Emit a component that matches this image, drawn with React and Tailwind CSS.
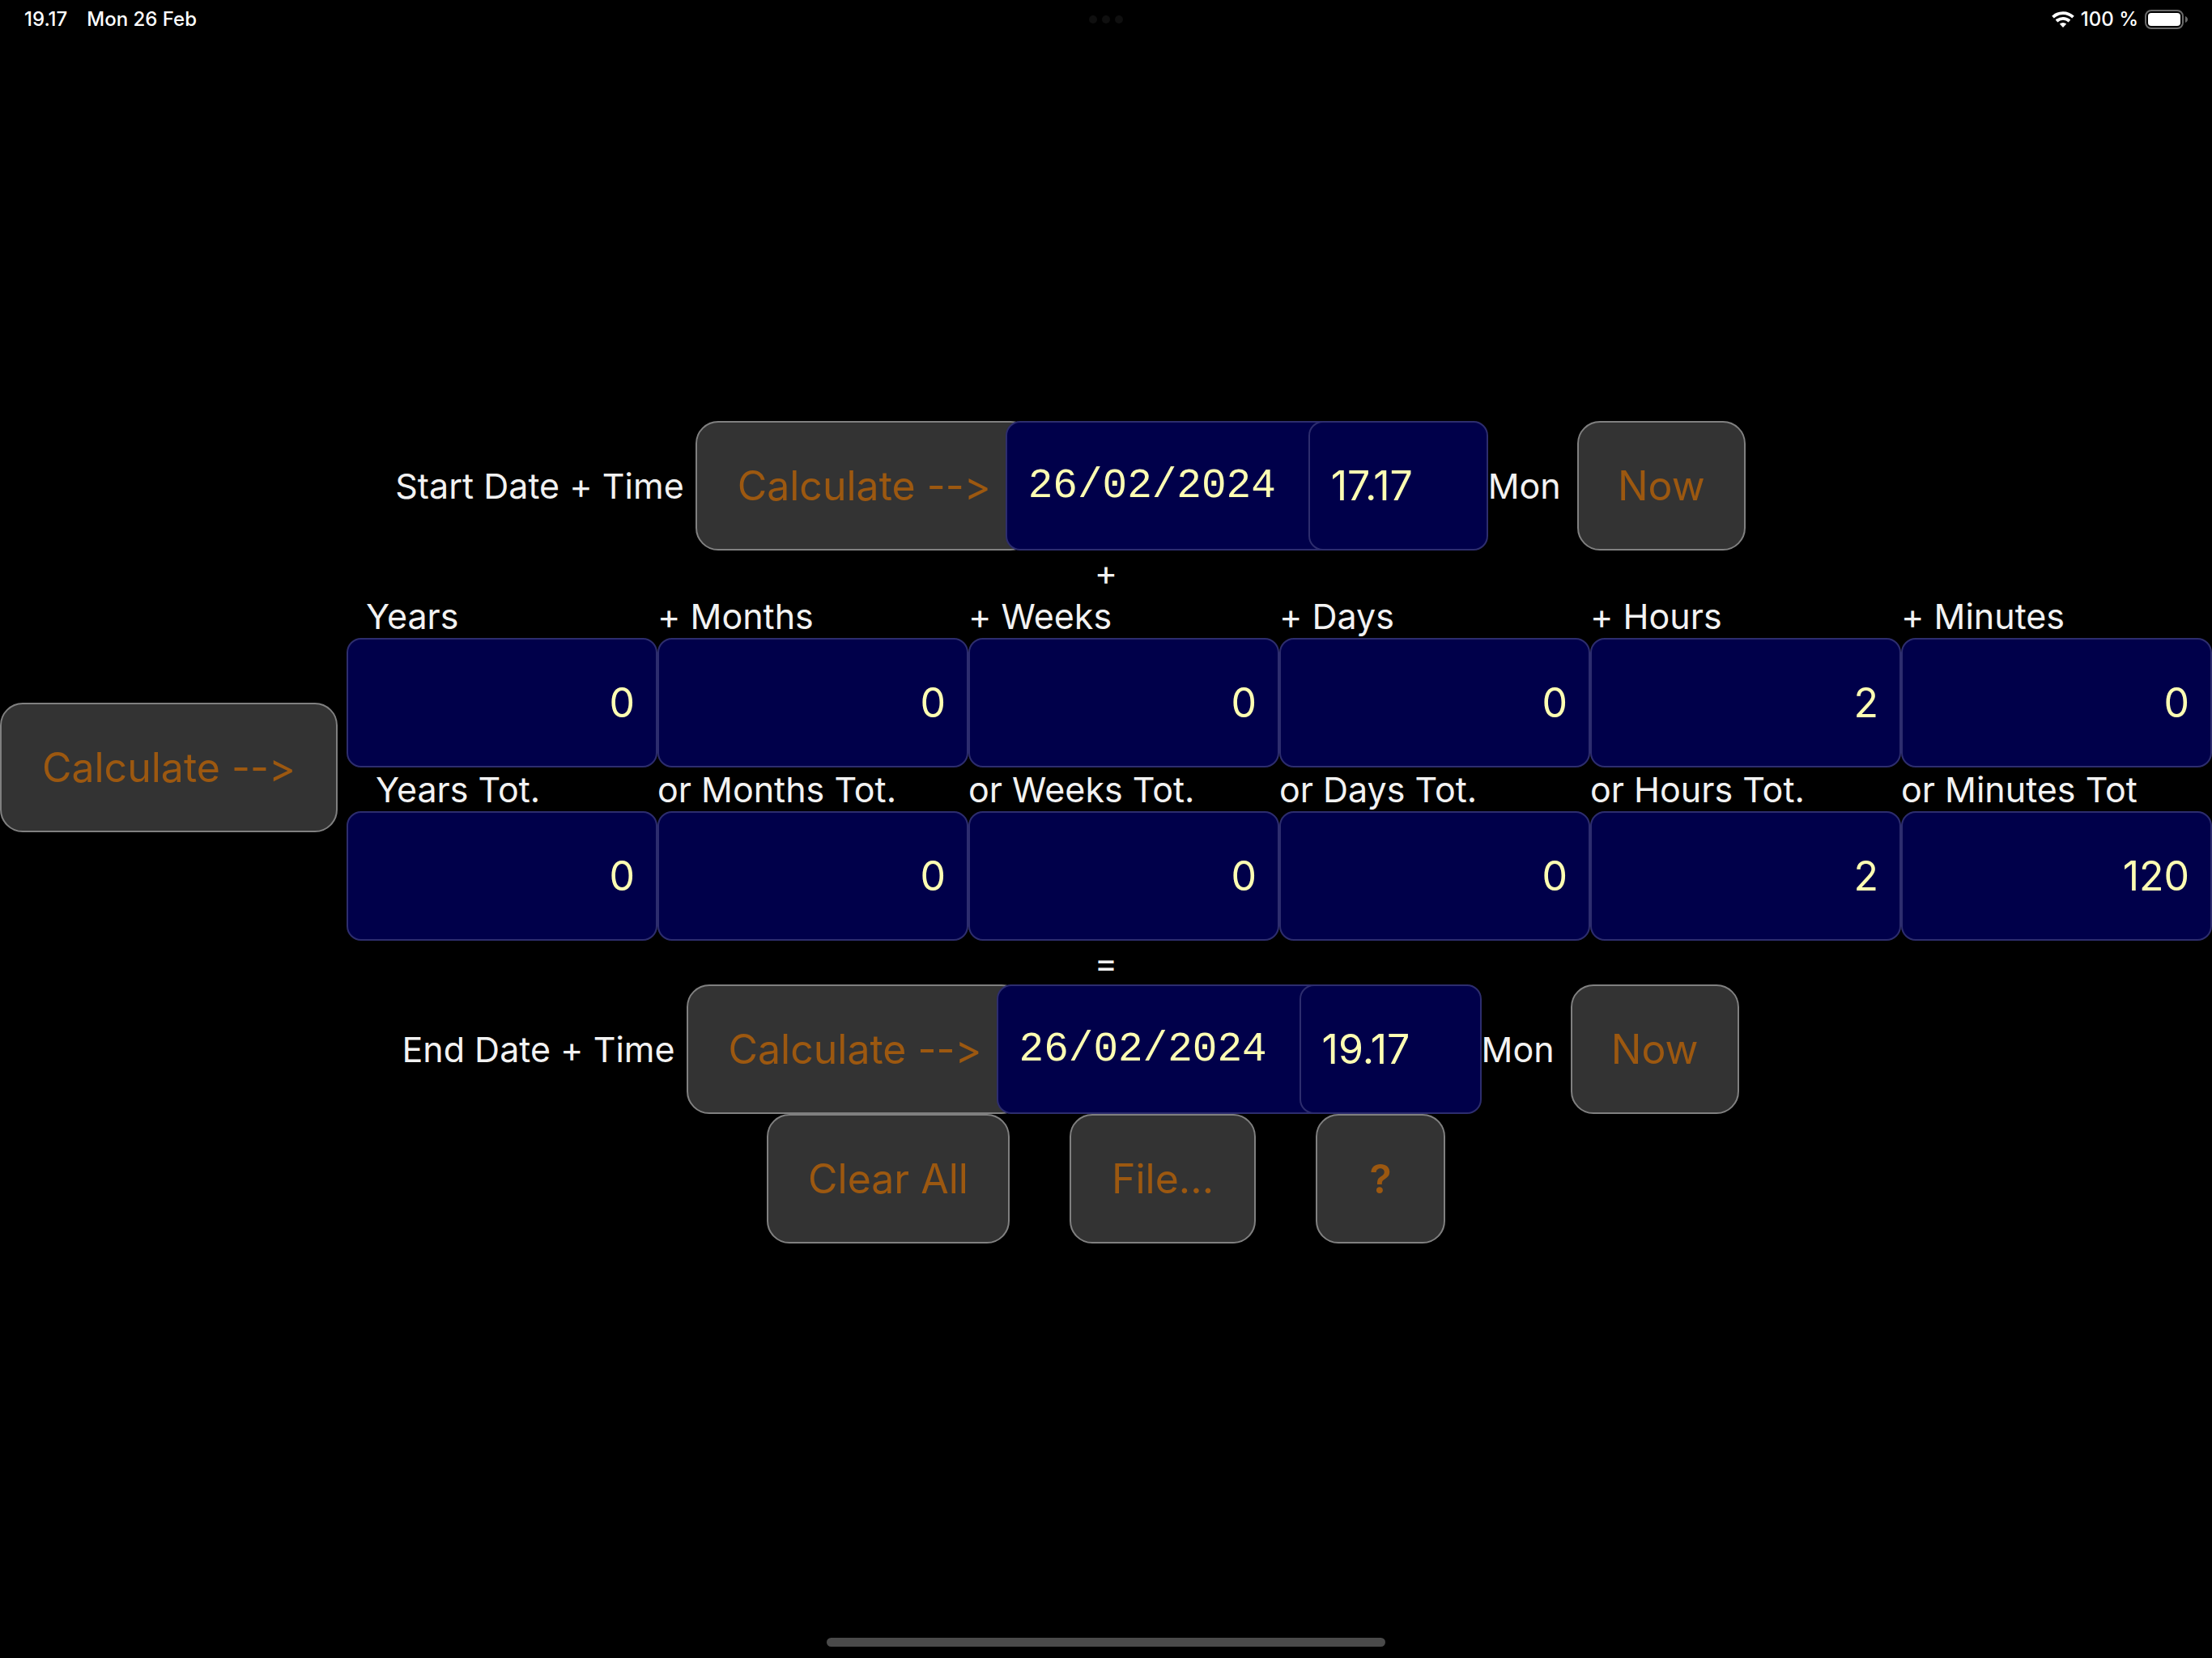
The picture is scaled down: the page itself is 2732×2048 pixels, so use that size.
import React from "react";

const BUTTON =
  "flex h-40 shrink-0 items-center justify-center whitespace-nowrap rounded-[28px] border-2 border-[#808080] bg-[#333333] text-[50px] text-[#9c5810]";
const FIELD =
  "h-40 min-w-0 rounded-[18px] border-2 border-[#2d2d6e] bg-[#00004a] px-[26px] text-[#ffffb3] outline-none";

const UNITS = [
  { add: "Years", total: "Years Tot.", addClass: "pl-6", totalClass: "pl-9", addValue: "0", totalValue: "0" },
  { add: "+ Months", total: "or Months Tot.", addValue: "0", totalValue: "0" },
  { add: "+ Weeks", total: "or Weeks Tot.", addValue: "0", totalValue: "0" },
  { add: "+ Days", total: "or Days Tot.", addValue: "0", totalValue: "0" },
  { add: "+ Hours", total: "or Hours Tot.", addValue: "2", totalValue: "2" },
  { add: "+ Minutes", total: "or Minutes Tot", addValue: "0", totalValue: "120" },
];

function StatusBar() {
  return (
    <header className="flex h-12 items-center justify-between px-[30px] text-[24px] font-medium text-white">
      <div className="flex flex-1 items-center gap-6">
        <span>19.17</span>
        <span>Mon 26 Feb</span>
      </div>
      <div className="flex gap-[6px]">
        <span className="size-[10px] rounded-full bg-[#0f0f0f]" />
        <span className="size-[10px] rounded-full bg-[#0f0f0f]" />
        <span className="size-[10px] rounded-full bg-[#0f0f0f]" />
      </div>
      <div className="flex flex-1 items-center justify-end gap-2">
        <svg className="h-5 w-7" viewBox="0 0 28 20" fill="none" stroke="white" strokeWidth="3.8">
          <path d="M1.500 7.200a18 18 0 0 1 25 0" />
          <path d="M6 12a11.600 11.600 0 0 1 16 0" />
          <path d="M14 20l-4.200-4.400a6 6 0 0 1 8.400 0z" fill="white" stroke="none" />
        </svg>
        <span>100 %</span>
        <svg className="h-6 w-[53px]" viewBox="0 0 53 24" fill="none">
          <rect x="1" y="1" width="46" height="22" rx="7" stroke="#6b6b6b" strokeWidth="2" />
          <rect x="4" y="4" width="40" height="16" rx="4" fill="white" />
          <path d="M50 8c4 1.500 4 6.500 0 8z" fill="#6b6b6b" />
        </svg>
      </div>
    </header>
  );
}

function DateRow({ id, label, time, timeClass }) {
  return (
    <div className="flex items-center justify-center pr-[88px]">
      <label htmlFor={id} className="pr-[14px] whitespace-nowrap">{label}</label>
      <button type="button" className={BUTTON + " -mr-[34px] w-[417px]"}>Calculate --&gt;</button>
      <input
        id={id}
        defaultValue="26/02/2024"
        className={FIELD + " relative -mr-[34px] w-[408px] font-['Liberation_Mono',monospace] text-[51px]"}
      />
      <input
        aria-label={label + " (time)"}
        defaultValue={time}
        className={FIELD + " relative text-[50px] " + timeClass}
      />
      <span className="w-[110px] whitespace-nowrap">Mon</span>
      <button type="button" className={BUTTON + " w-[208px]"}>Now</button>
    </div>
  );
}

function UnitCell({ id, label, value, labelClass = "" }) {
  return (
    <div className="flex min-w-0 flex-col">
      <label htmlFor={id} className={"whitespace-nowrap " + labelClass}>{label}</label>
      <input id={id} defaultValue={value} className={FIELD + " w-full text-right text-[50px]"} />
    </div>
  );
}

export default function App() {
  return (
    <div className="flex min-h-screen flex-col bg-black font-['Inter',sans-serif] [font-variant-ligatures:none] [font-feature-settings:'calt'_0]">
      <StatusBar />
      <main className="flex flex-1 flex-col justify-center text-[43px] leading-[54px] text-[#f2f2f2]">
        <DateRow id="start" label="Start Date + Time" time="17.17" timeClass="w-[222px]" />
        <div className="text-center">+</div>
        <div className="flex items-center gap-[11px]">
          <button type="button" className={BUTTON + " w-[417px]"}>Calculate --&gt;</button>
          <div className="grid min-w-0 flex-1 grid-cols-6">
            {UNITS.map((u) => (
              <UnitCell key={u.add} id={u.add} label={u.add} value={u.addValue} labelClass={u.addClass} />
            ))}
            {UNITS.map((u) => (
              <UnitCell key={u.total} id={u.total} label={u.total} value={u.totalValue} labelClass={u.totalClass} />
            ))}
          </div>
        </div>
        <div className="text-center">=</div>
        <DateRow id="end" label="End Date + Time" time="19.17" timeClass="w-[225px]" />
        <div className="flex justify-center gap-[74px]">
          <button type="button" className={BUTTON + " w-[300px]"}>Clear All</button>
          <button type="button" className={BUTTON + " w-[230px]"}>File...</button>
          <button type="button" className={BUTTON + " w-40 font-semibold"}>?</button>
        </div>
      </main>
      <footer className="flex h-10 items-center justify-center">
        <div className="h-[11px] w-[690px] rounded-full bg-[#4a4a4a]" />
      </footer>
    </div>
  );
}
